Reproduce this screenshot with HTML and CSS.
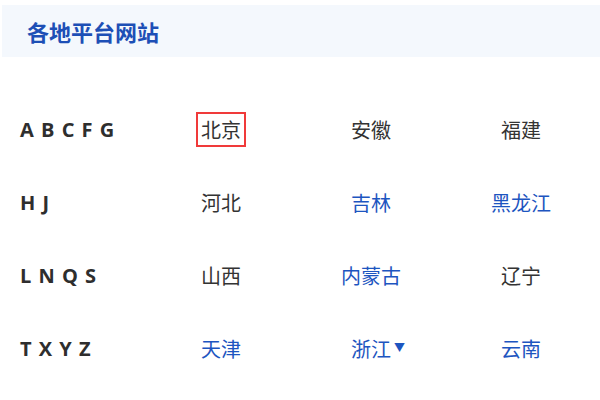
FILE: index.html
```html
<!DOCTYPE html>
<html lang="zh-CN">
<head>
  <meta charset="UTF-8" />
  <meta name="viewport" content="width=device-width, initial-scale=1" />
  <title>各地平台网站</title>
  <link rel="stylesheet" href="styles.css">
</head>
<body>

<div class="page">
  <div class="panel-head">
    <h2>各地平台网站</h2>
  </div>

  <ul class="region-list">
    <li class="region-row">
      <span class="letters">A B C F G</span>
      <a class="site current">北京</a>
      <a class="site">安徽</a>
      <a class="site">福建</a>
    </li>
    <li class="region-row">
      <span class="letters">H J</span>
      <a class="site">河北</a>
      <a class="site link">吉林</a>
      <a class="site link">黑龙江</a>
    </li>
    <li class="region-row">
      <span class="letters">L N Q S</span>
      <a class="site">山西</a>
      <a class="site link">内蒙古</a>
      <a class="site">辽宁</a>
    </li>
    <li class="region-row">
      <span class="letters">T X Y Z</span>
      <a class="site link">天津</a>
      <a class="site link has-menu">浙江<span class="caret">▼</span></a>
      <a class="site link">云南</a>
    </li>
  </ul>
</div>

</body>
</html>
```

FILE: styles.css
```css
* { box-sizing: border-box; }

body {
  margin: 0;
  font-family: "Open Sans", "Noto Sans CJK SC", sans-serif;
  color: #333;
  background: #fff;
}

.page {
  padding: 5px 0 0 2px;
}

.panel-head {
  height: 52px;
  background: #f4f8fd;
  display: flex;
  align-items: center;
  padding-left: 25px;
}

.panel-head h2 {
  margin: 0;
  font-family: "Noto Sans CJK SC", sans-serif;
  font-size: 22px;
  font-weight: 700;
  color: #1d4fb6;
}

.region-list {
  list-style: none;
  margin: 36px 0 0;
  padding: 0;
}

.region-row {
  display: grid;
  grid-template-columns: 144px repeat(3, 150px);
  align-items: center;
  height: 73px;
}

.letters {
  padding-left: 18px;
  font-size: 20px;
  font-weight: 700;
  letter-spacing: 1px;
  color: #2e2e2e;
}

.site {
  position: relative;
  justify-self: center;
  font-family: "Noto Sans CJK SC", sans-serif;
  font-size: 20px;
  color: #333;
  cursor: pointer;
  border: 2px solid transparent;
  padding: 2px 3px;
  line-height: 27px;
}

.site.link { color: #1d55c0; }

.site.current { border-color: #f03a3a; }

.caret {
  position: absolute;
  left: 100%;
  top: 9px;
  font-size: 11px;
  line-height: 11px;
}
```
